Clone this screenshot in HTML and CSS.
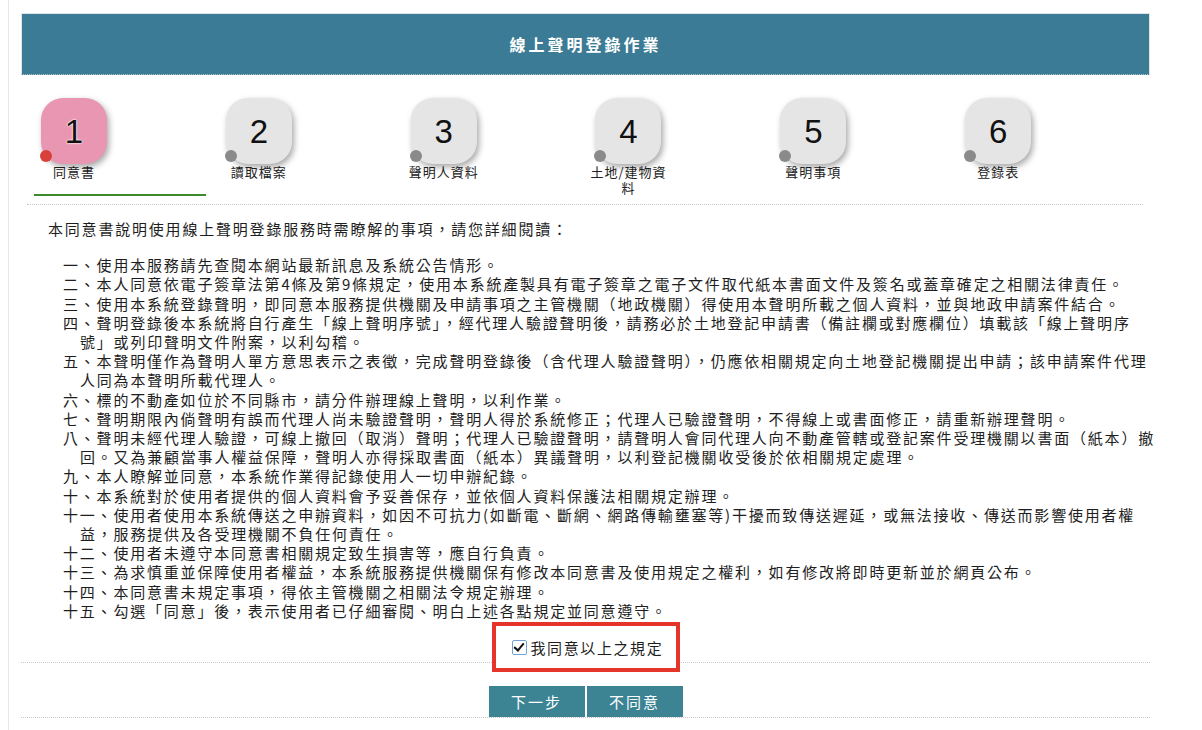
FILE: index.html
```html
<!DOCTYPE html>
<html lang="zh-Hant">
<head>
  <meta charset="UTF-8" />
  <meta name="viewport" content="width=device-width, initial-scale=1.0" />
  <title>線上聲明登錄作業</title>
  <link rel="stylesheet" href="styles.css">
</head>
<body>
  <div class="page">
    <header class="title-bar">
      <h1>線上聲明登錄作業</h1>
    </header>

    <div class="steps">
      <div class="step active">
        <div class="tile"><span class="num">1</span><span class="dot"></span></div>
        <div class="label">同意書</div>
      </div>
      <div class="step">
        <div class="tile"><span class="num">2</span><span class="dot"></span></div>
        <div class="label">讀取檔案</div>
      </div>
      <div class="step">
        <div class="tile"><span class="num">3</span><span class="dot"></span></div>
        <div class="label">聲明人資料</div>
      </div>
      <div class="step">
        <div class="tile"><span class="num">4</span><span class="dot"></span></div>
        <div class="label">土地/建物資料</div>
      </div>
      <div class="step">
        <div class="tile"><span class="num">5</span><span class="dot"></span></div>
        <div class="label">聲明事項</div>
      </div>
      <div class="step">
        <div class="tile"><span class="num">6</span><span class="dot"></span></div>
        <div class="label">登錄表</div>
      </div>
    </div>

    <div class="terms">
      <p class="intro">本同意書說明使用線上聲明登錄服務時需瞭解的事項，請您詳細閱讀：</p>
      <ul class="rules">
        <li>一、使用本服務請先查閱本網站最新訊息及系統公告情形。</li>
        <li>二、本人同意依電子簽章法第4條及第9條規定，使用本系統產製具有電子簽章之電子文件取代紙本書面文件及簽名或蓋章確定之相關法律責任。</li>
        <li>三、使用本系統登錄聲明，即同意本服務提供機關及申請事項之主管機關（地政機關）得使用本聲明所載之個人資料，並與地政申請案件結合。</li>
        <li>四、聲明登錄後本系統將自行產生「線上聲明序號」，經代理人驗證聲明後，請務必於土地登記申請書（備註欄或對應欄位）填載該「線上聲明序<br>號」或列印聲明文件附案，以利勾稽。</li>
        <li>五、本聲明僅作為聲明人單方意思表示之表徵，完成聲明登錄後（含代理人驗證聲明），仍應依相關規定向土地登記機關提出申請；該申請案件代理<br>人同為本聲明所載代理人。</li>
        <li>六、標的不動產如位於不同縣市，請分件辦理線上聲明，以利作業。</li>
        <li>七、聲明期限內倘聲明有誤而代理人尚未驗證聲明，聲明人得於系統修正；代理人已驗證聲明，不得線上或書面修正，請重新辦理聲明。</li>
        <li>八、聲明未經代理人驗證，可線上撤回（取消）聲明；代理人已驗證聲明，請聲明人會同代理人向不動產管轄或登記案件受理機關以書面（紙本）撤<br>回。又為兼顧當事人權益保障，聲明人亦得採取書面（紙本）異議聲明，以利登記機關收受後於依相關規定處理。</li>
        <li>九、本人瞭解並同意，本系統作業得記錄使用人一切申辦紀錄。</li>
        <li>十、本系統對於使用者提供的個人資料會予妥善保存，並依個人資料保護法相關規定辦理。</li>
        <li>十一、使用者使用本系統傳送之申辦資料，如因不可抗力(如斷電、斷網、網路傳輸壅塞等)干擾而致傳送遲延，或無法接收、傳送而影響使用者權<br>益，服務提供及各受理機關不負任何責任。</li>
        <li>十二、使用者未遵守本同意書相關規定致生損害等，應自行負責。</li>
        <li>十三、為求慎重並保障使用者權益，本系統服務提供機關保有修改本同意書及使用規定之權利，如有修改將即時更新並於網頁公布。</li>
        <li>十四、本同意書未規定事項，得依主管機關之相關法令規定辦理。</li>
        <li>十五、勾選「同意」後，表示使用者已仔細審閱、明白上述各點規定並同意遵守。</li>
      </ul>
    </div>

    <div class="agree-row">
      <label class="agree"><input type="checkbox" checked><span>我同意以上之規定</span></label>
    </div>

    <div class="actions">
      <button class="btn">下一步</button>
      <button class="btn">不同意</button>
    </div>
  </div>
</body>
</html>
```

FILE: styles.css
```css
body {
  margin: 0;
  padding: 0;
  background: #fff;
  color: #1e1e1e;
  font-family: "Noto Sans CJK TC", "Noto Sans", sans-serif;
}
.page {
  margin-left: 8px;
  width: 1129px;
  min-height: 100vh;
  padding: 13px 0 0 12px;
  border-left: 1px solid #e6e6e6;
}
.title-bar {
  height: 60px;
  background-color: #3c7b95;
  border: 1px solid #dde5e9;
  border-bottom: 1px dotted #a9c6d1;
  display: flex;
  align-items: center;
  justify-content: center;
}
.title-bar h1 {
  margin: 0;
  color: #fff;
  font-size: 16px;
  font-weight: bold;
  letter-spacing: 3px;
}

/* steps */
.steps {
  display: flex;
  margin: 0 7px 0 6px;
  padding: 23px 0 8px 7px;
  border-bottom: 1px dotted #c8c8c8;
}
.step {
  width: 173px;
  height: 96px;
  margin-right: 12.5px;
  border-bottom: 2px solid transparent;
}
.step.active {
  border-bottom-color: #3b8a2b;
}
.tile {
  position: relative;
  width: 66px;
  height: 66px;
  margin-left: 7px;
  border-radius: 22px;
  background: #e5e5e5;
  box-shadow: 2px 3px 6px rgba(0, 0, 0, 0.35);
  display: flex;
  align-items: center;
  justify-content: center;
}
.step.active .tile {
  background: #e896b1;
}
.num {
  font-family: "Liberation Sans", Arial, sans-serif;
  font-size: 33px;
  color: #111;
  margin-top: 2px;
}
.step.active .num {
  text-shadow: 0 0 2px #fff, 0 0 2px #fff;
}
.dot {
  position: absolute;
  left: -1px;
  bottom: 2px;
  width: 12px;
  height: 12px;
  border-radius: 50%;
  background: #8a8a8a;
}
.step.active .dot {
  background: #d8413a;
}
.label {
  width: 80px;
  font-size: 13px;
  line-height: 16px;
  letter-spacing: 1px;
  text-align: center;
  color: #222;
}

/* terms */
.terms {
  padding-left: 27px;
  font-size: 15px;
  letter-spacing: 1.8px;
  line-height: 19.2px;
  white-space: nowrap;
}
.intro {
  margin: 14px 0 17px;
}
.rules {
  list-style: none;
  margin: 0 0 0 15px;
  padding: 0;
}
.rules li {
  padding-left: 17px;
  text-indent: -17px;
}

.agree-row {
  height: 41px;
  margin-top: 1px;
  border-bottom: 1px dotted #c8c8c8;
  text-align: center;
}
.agree {
  display: inline-flex;
  align-items: center;
  width: 164px;
  height: 42px;
  margin-top: 1px;
  padding-left: 16px;
  border: 4px solid #e5352a;
  background: #fff;
  font-size: 15px;
  letter-spacing: 1.6px;
  text-align: left;
  box-sizing: content-box;
}
.agree input {
  appearance: none;
  position: relative;
  box-sizing: border-box;
  width: 15px;
  height: 15px;
  margin: 1px 4px 0 0;
  border: 1px solid #6fa3d8;
  border-radius: 2px;
  background: #fff;
  flex-shrink: 0;
}
.agree input:checked::after {
  content: "";
  position: absolute;
  left: 3.5px;
  top: 0;
  width: 4px;
  height: 8px;
  border: solid #111;
  border-width: 0 2.5px 2.5px 0;
  transform: rotate(40deg);
}

.actions {
  padding: 23px 0 0;
  height: 31px;
  border-bottom: 1px dotted #c8c8c8;
  display: flex;
  justify-content: center;
  gap: 2px;
}
.btn {
  width: 96px;
  height: 31px;
  border: none;
  background-color: #3c8494;
  color: #fff;
  font-family: "Noto Sans CJK TC", "Noto Sans", sans-serif;
  font-size: 15px;
  letter-spacing: 2px;
  cursor: pointer;
}
.btn:hover {
  background-color: #2f7080;
}
```
